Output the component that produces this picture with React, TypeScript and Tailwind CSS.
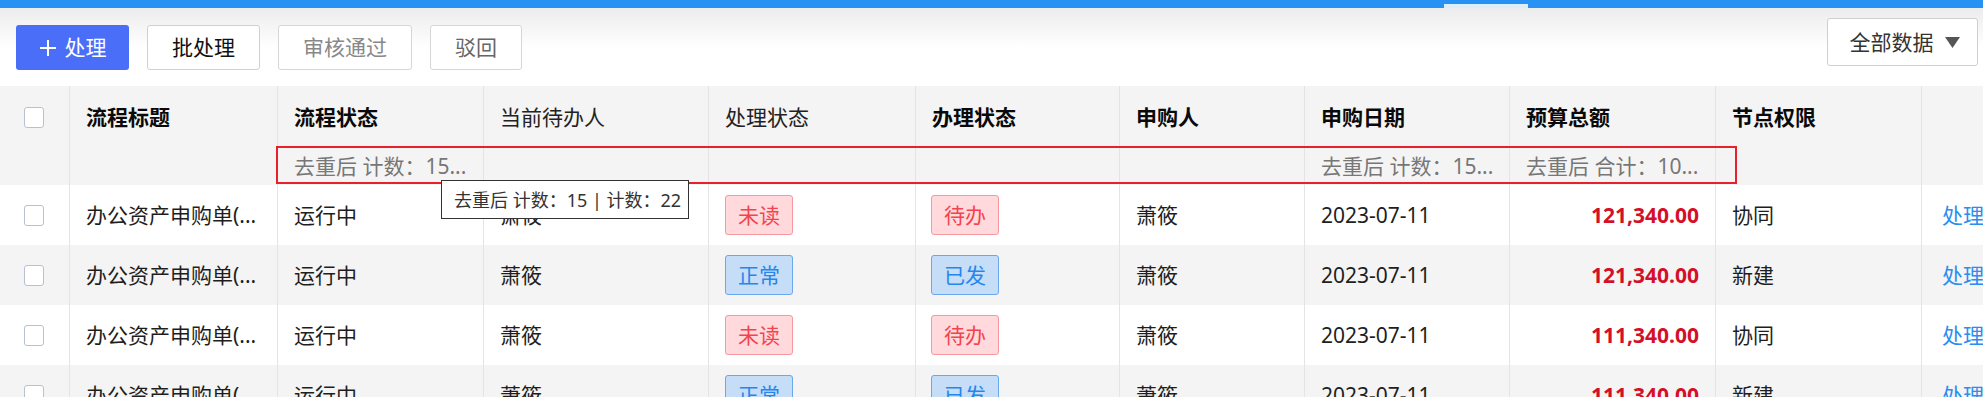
import React from 'react'

const COLS = 'grid grid-cols-[70px_208px_206px_225px_207px_204px_185px_205px_206px_206px_140px]'

type Badge = { text: string; tone: 'red' | 'blue' }

const rows: {
  title: string
  flow: string
  owner: string
  deal: Badge
  handle: Badge
  buyer: string
  date: string
  amount: string
  node: string
}[] = [
  { title: '办公资产申购单(...', flow: '运行中', owner: '萧筱', deal: { text: '未读', tone: 'red' }, handle: { text: '待办', tone: 'red' }, buyer: '萧筱', date: '2023-07-11', amount: '121,340.00', node: '协同' },
  { title: '办公资产申购单(...', flow: '运行中', owner: '萧筱', deal: { text: '正常', tone: 'blue' }, handle: { text: '已发', tone: 'blue' }, buyer: '萧筱', date: '2023-07-11', amount: '121,340.00', node: '新建' },
  { title: '办公资产申购单(...', flow: '运行中', owner: '萧筱', deal: { text: '未读', tone: 'red' }, handle: { text: '待办', tone: 'red' }, buyer: '萧筱', date: '2023-07-11', amount: '111,340.00', node: '协同' },
  { title: '办公资产申购单(...', flow: '运行中', owner: '萧筱', deal: { text: '正常', tone: 'blue' }, handle: { text: '已发', tone: 'blue' }, buyer: '萧筱', date: '2023-07-11', amount: '111,340.00', node: '新建' },
]

function Checkbox() {
  return <div className="h-[21px] w-[20px] rounded-[3px] border border-[#b7c1d1] bg-white" />
}

function Tag({ badge }: { badge: Badge }) {
  const tone =
    badge.tone === 'red'
      ? 'bg-[#ffd9dc] border-[#f5999f] text-[#f4434d]'
      : 'bg-[#c6ddf8] border-[#6aa8ee] text-[#2586eb]'
  return (
    <div className={`flex h-[40px] w-[68px] items-center justify-center rounded-[3px] border ${tone}`}>
      {badge.text}
    </div>
  )
}

// header cell: title on top, summary text below
function HeadCell({ label, bold, summary }: { label: string; bold?: boolean; summary?: string }) {
  return (
    <div className="flex flex-col border-r border-[#e4e4e4]">
      <div className={`flex h-[62px] items-center pl-4 ${bold ? 'font-bold text-[#0a0a0a]' : 'text-[#222]'}`}>{label}</div>
      <div className="flex h-[37px] items-center pl-4 text-[#777]">{summary}</div>
    </div>
  )
}

export default function App() {
  return (
    <div className="relative h-[397px] w-full overflow-hidden bg-white font-['Noto_Sans','Noto_Sans_CJK_SC',sans-serif] text-[21px] leading-none text-[#1e1e1e]">
      {/* top bar */}
      <div className="flex h-2 items-end bg-[#2891f4]">
        <div className="ml-[1444px] h-1 w-[84px] bg-[#dcedfc]" />
      </div>

      {/* toolbar */}
      <div className="flex h-[78px] items-start bg-gradient-to-b from-[#ececec] via-white to-white pl-4 pr-[5px]">
        <div className="mt-[17px] flex gap-[18px]">
          <button className="flex h-[45px] w-[113px] items-center justify-center gap-2 rounded-[3px] bg-[#4b6ef8] text-white">
            <svg width="18" height="18" viewBox="0 0 18 18"><path d="M9 1v16M1 9h16" stroke="white" strokeWidth="2" /></svg>
            处理
          </button>
          <button className="flex h-[45px] w-[113px] items-center justify-center rounded-[3px] border border-[#d0d0d0] bg-white text-[#111]">批处理</button>
          <button className="flex h-[45px] w-[134px] items-center justify-center rounded-[3px] border border-[#d6d6d6] bg-white text-[#888]">审核通过</button>
          <button className="flex h-[45px] w-[92px] items-center justify-center rounded-[3px] border border-[#d6d6d6] bg-white text-[#666]">驳回</button>
        </div>
        <button className="ml-auto mt-[10px] flex h-[48px] w-[151px] items-center justify-center gap-[11px] rounded-[3px] border border-[#cfcfcf] bg-white pl-1 text-[#333]">
          全部数据
          <svg width="15" height="11" viewBox="0 0 15 11"><path d="M0 0h15L7.5 11z" fill="#555" /></svg>
        </button>
      </div>

      {/* table */}
      <div className="w-[2062px]">
        <div className={`${COLS} h-[99px] bg-[#f4f4f4]`}>
          <div className="flex flex-col border-r border-[#e4e4e4]">
            <div className="flex h-[62px] items-center pl-6"><Checkbox /></div>
          </div>
          <HeadCell label="流程标题" bold />
          <HeadCell label="流程状态" bold summary="去重后 计数：15..." />
          <HeadCell label="当前待办人" />
          <HeadCell label="处理状态" />
          <HeadCell label="办理状态" bold />
          <HeadCell label="申购人" bold />
          <HeadCell label="申购日期" bold summary="去重后 计数：15..." />
          <HeadCell label="预算总额" bold summary="去重后 合计：10..." />
          <HeadCell label="节点权限" bold />
          <div />
        </div>

        {rows.map((r, i) => (
          <div key={i} className={`${COLS} h-[60px] ${i % 2 === 1 ? 'bg-[#f4f4f4]' : 'bg-white'}`}>
            <div className="flex items-center border-r border-[#e4e4e4] pl-6"><Checkbox /></div>
            <div className="flex items-center border-r border-[#e4e4e4] pl-4">{r.title}</div>
            <div className="flex items-center border-r border-[#e4e4e4] pl-4">{r.flow}</div>
            <div className="flex items-center border-r border-[#e4e4e4] pl-4">{r.owner}</div>
            <div className="flex items-center border-r border-[#e4e4e4] pl-4"><Tag badge={r.deal} /></div>
            <div className="flex items-center border-r border-[#e4e4e4] pl-[15px]"><Tag badge={r.handle} /></div>
            <div className="flex items-center border-r border-[#e4e4e4] pl-4">{r.buyer}</div>
            <div className="flex items-center border-r border-[#e4e4e4] pl-4">{r.date}</div>
            <div className="flex items-center justify-end border-r border-[#e4e4e4] pr-4 font-bold text-[#d40f2a]">{r.amount}</div>
            <div className="flex items-center border-r border-[#e4e4e4] pl-4">{r.node}</div>
            <div className="flex items-center pl-5 text-[#2b8df0]">处理</div>
          </div>
        ))}
      </div>

      {/* annotation around summary cells */}
      <div className="pointer-events-none absolute left-[276px] top-[146px] h-[38px] w-[1461px] border-2 border-[#e8202b]" />

      {/* tooltip */}
      <div className="absolute left-[441px] top-[180px] flex h-[39px] w-[248px] items-center border border-[#333] bg-white pl-3 text-[18px] text-[#333]">
        去重后 计数：15 | 计数：22
      </div>
    </div>
  )
}
